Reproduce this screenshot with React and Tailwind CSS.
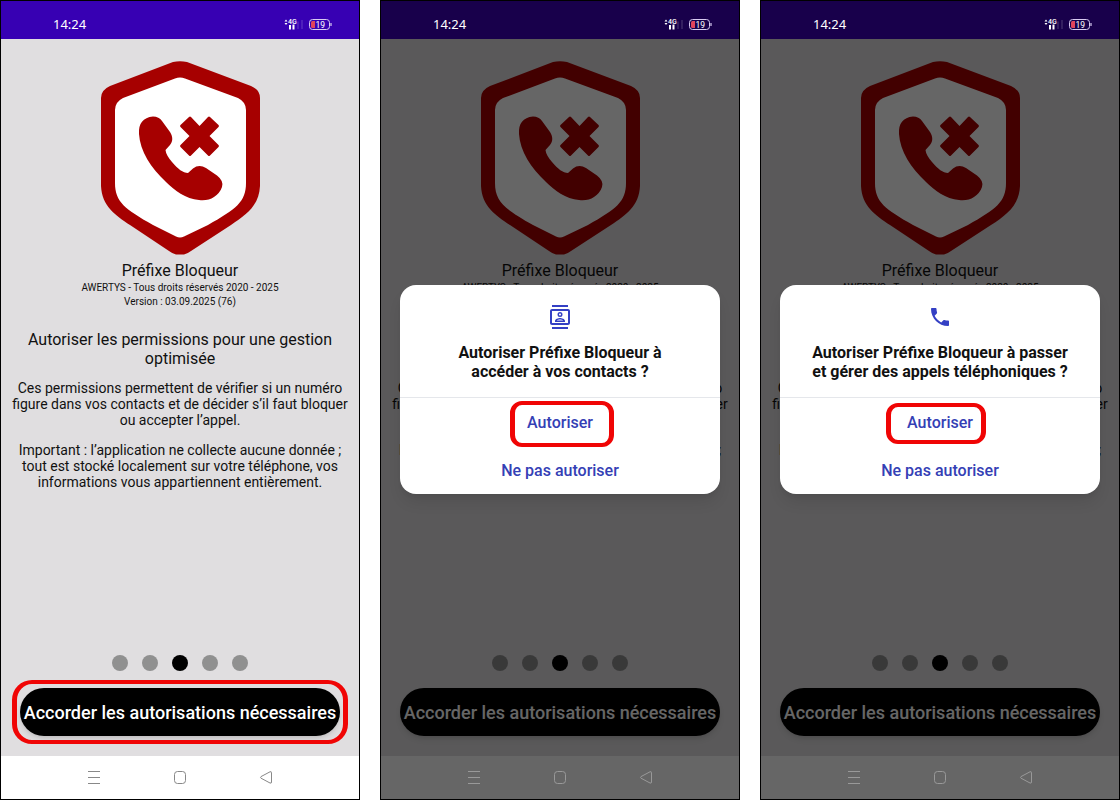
import React from 'react';
import { MdOutlineContacts, MdPhone } from 'react-icons/md';

const pages = [0, 1, 2, 3, 4];

const StatusBar = ({ dimmed }) => (
  <div className={`flex h-[38px] shrink-0 items-end justify-between pr-[26px] pl-[52px] pb-[5px] text-white ${dimmed ? 'bg-[#18004b]' : 'bg-[#3700b3]'}`}>
    <span className="font-['Noto_Sans'] text-[13px] leading-5">14:24</span>
    <svg className="mb-[2px] h-4 w-[49px]" viewBox="0 0 49 16" fill="none" aria-hidden="true">
      <path d="M0.5 5.5 L2 3.5 L3.5 5.5 Z M0.5 7 L2 9 L3.5 7 Z" fill="#fff" />
      <text x="4" y="7.5" fill="#fff" fontFamily="Roboto, sans-serif" fontSize="7" fontWeight="500">4G</text>
      <path d="M6 9V13.500M9.500 8.500V13.500" stroke="#fff" strokeWidth="2" />
      <path d="M14 5.500V13M18 4V13" stroke="#fff" strokeOpacity="0.2" strokeWidth="1.2" />
      <rect x="25.5" y="3.500" width="20" height="10" rx="3" stroke="#d9ccf2" />
      <path d="M28.5 5H31V12H28.5A1.5 1.5 0 0 1 27 10.500V6.500A1.5 1.5 0 0 1 28.5 5Z" fill="#e0435c" />
      <path d="M47 7V10" stroke="#d9ccf2" strokeWidth="1.2" />
      <text x="31.5" y="11.500" fill="#fff" fontFamily="Roboto, sans-serif" fontSize="8.5">19</text>
    </svg>
  </div>
);

const Logo = () => (
  <svg className="h-[194px] w-40" viewBox="-1 0 160 194" role="img" aria-label="Préfixe Bloqueur">
    <path
      d="M72 1Q79 -0.5 86 1L150 25Q159 29 159 37V125C158 145 145 154 130 164L90 190Q86 193 83 193.5H75Q72 193 68 190L29 164C14 154 1 145 0 125V37Q0 29 9 25Z"
      fill="#a60000"
    />
    <path
      d="M74 17.5Q79 15.5 84 17.5L137 37Q145 41 145 49V122C145 141 135 148 107 164L83 175.500Q79 177.500 75 175.500L52 164C24 148 14 141 14 122V49Q14 41 22 37Z"
      fill="#fff"
    />
    <path
      d="M52 55.5Q58 55.5 61 60L69 71C72 76 72 80 69 84L64.5 89Q65 94 71 101C77 108 82 112 87 112L92 107.500Q98 103 105 107L116 114.500Q123 120 121 126Q119 132 113 136Q107 140 98 139C85 138 73 129 65 121C50 107 39 90 38 73Q37 57 52 55.5Z"
      fill="#a60000"
    />
    <path
      d="M79.5 64L88 56Q89 55 90 56L98.5 65L107 56Q108 55 109 56L117.5 64Q118.5 65 117.5 66L108.5 75L117.5 84Q118.5 85 117.5 86L109 94.5Q108 95.5 107 94.5L98.5 86L90 94.5Q89 95.5 88 94.5L79.5 86Q78.5 85 79.5 84L88.5 75L79.5 66Q78.5 65 79.5 64Z"
      fill="#a60000"
    />
  </svg>
);

const NavBar = ({ dimmed }) => (
  <nav className={`flex h-[43px] shrink-0 items-center justify-center gap-[70px] pb-[2px] pr-px ${dimmed ? 'bg-[#666] text-[#999]' : 'bg-white text-[#888]'}`}>
    <button aria-label="Applications récentes">
      <svg className="h-4 w-4" viewBox="0 0 16 16" fill="none" stroke="currentColor">
        <path d="M2 2.5H14M2 8.5H14M2 14.5H14" />
      </svg>
    </button>
    <button aria-label="Accueil">
      <svg className="h-4 w-4" viewBox="0 0 16 16" fill="none" stroke="currentColor">
        <rect x="2.5" y="2.5" width="11" height="12" rx="3" />
      </svg>
    </button>
    <button aria-label="Retour">
      <svg className="h-4 w-4" viewBox="0 0 16 16" fill="none" stroke="currentColor" strokeLinejoin="round">
        <path d="M3 7.6L12 2.8Q13.5 2.2 13.5 3.8V13Q13.5 14.6 12 14L3 9.2Q2 8.4 3 7.6Z" />
      </svg>
    </button>
  </nav>
);

const PermissionDialog = ({ icon, title, ring }) => (
  <div role="dialog" aria-label={title} className="w-full rounded-2xl bg-white text-center shadow-lg">
    <div className="flex flex-col items-center border-b border-gray-200 px-7 pt-5 pb-4">
      {icon}
      <h2 className="mt-[14px] text-base leading-[19px] font-bold text-[#111]">{title}</h2>
    </div>
    <div className="flex flex-col text-base font-medium text-[#3440b5]">
      <button className="relative h-12 pt-[2px]">
        Autoriser
        <span className={`absolute rounded-xl border-x-5 border-y-4 border-[#f00505] ${ring}`} />
      </button>
      <button className="h-12 pt-[2px]">Ne pas autoriser</button>
    </div>
  </div>
);

const Phone = ({ highlighted, children }) => {
  const dimmed = Boolean(children);

  return (
    <section className="relative flex min-h-screen flex-col border border-black">
      <StatusBar dimmed={dimmed} />
      <main className="relative flex grow flex-col items-center bg-[#e0dee0] pt-[22px] pb-5 text-center text-[#111]">
        <Logo />
        <h1 className="mt-1.5 text-base leading-5">Préfixe Bloqueur</h1>
        <p className="text-[10px] leading-[14px]">AWERTYS - Tous droits réservés 2020 - 2025</p>
        <p className="text-[10px] leading-[14px]">Version : 03.09.2025 (76)</p>
        <h2 className="mt-[21px] px-5 text-base leading-[19px]">Autoriser les permissions pour une gestion optimisée</h2>
        <p className="mt-3 px-2 text-sm leading-4">
          Ces permissions permettent de vérifier si un numéro figure dans vos contacts et de décider s’il faut bloquer ou accepter l’appel.
        </p>
        <p className="mt-[14px] px-2 text-sm leading-4">
          Important : l’application ne collecte aucune donnée ; tout est stocké localement sur votre téléphone, vos informations vous appartiennent entièrement.
        </p>

        <div className="mt-auto flex gap-[14px]">
          {pages.map((page) => (
            <span key={page} className={`h-4 w-4 rounded-full ${page === 2 ? 'bg-black' : 'bg-[#909090]'}`} />
          ))}
        </div>
        <div className="mt-[17px] w-full px-[19px]">
          <button className="relative h-12 w-full rounded-full bg-black pt-[2px] text-lg font-medium whitespace-nowrap text-white shadow-md">
            Accorder les autorisations nécessaires
            {highlighted && <span className="absolute -inset-2 rounded-[20px] border-x-5 border-y-4 border-[#f00505]" />}
          </button>
        </div>

        {/* Scrim and dialog over the page */}
        {dimmed && (
          <div className="absolute inset-0 flex items-center justify-center bg-black/60 px-[19px] pb-4">{children}</div>
        )}
      </main>
      <NavBar dimmed={dimmed} />
    </section>
  );
};

const App = () => {
  return (
    <div className="grid grid-cols-3 gap-5 bg-white font-[Roboto,sans-serif]">
      <Phone highlighted />
      <Phone>
        <PermissionDialog
          icon={<MdOutlineContacts className="h-6 w-6 text-[#3440c4]" />}
          title="Autoriser Préfixe Bloqueur à accéder à vos contacts ?"
          ring="top-[3px] left-[110px] h-[46px] w-[104px]"
        />
      </Phone>
      <Phone>
        <PermissionDialog
          icon={<MdPhone className="h-6 w-6 text-[#3440c4]" />}
          title="Autoriser Préfixe Bloqueur à passer et gérer des appels téléphoniques ?"
          ring="top-[5px] left-[106px] h-[41px] w-[100px]"
        />
      </Phone>
    </div>
  );
};

export default App;
